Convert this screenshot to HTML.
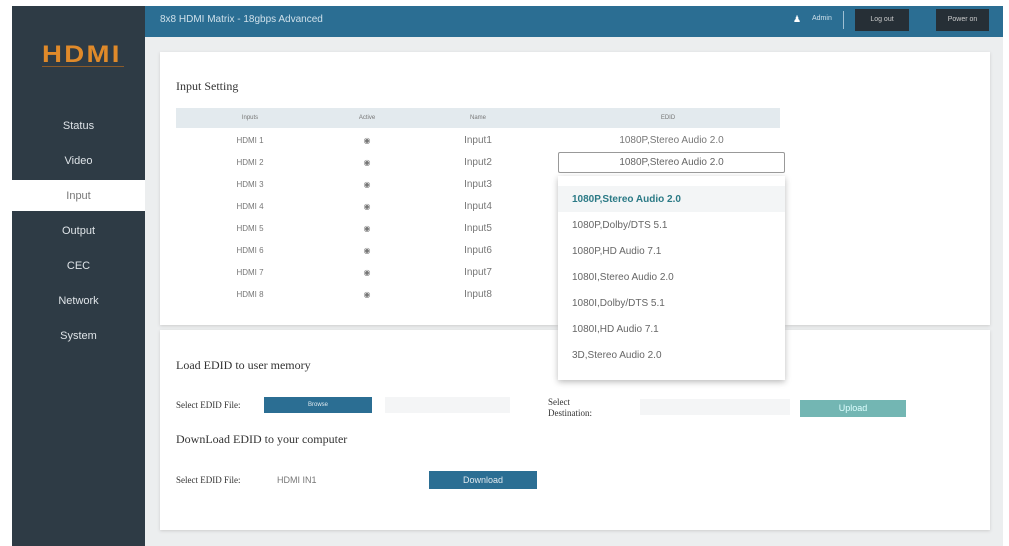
<!DOCTYPE html>
<html><head><style>
body{margin:0;width:1009px;height:546px;background:#fff;position:relative;overflow:hidden;font-family:"Liberation Sans",sans-serif;}
.a{position:absolute}
.side{left:12px;top:6px;width:133px;height:540px;background:#2e3b45}
.menu{left:12px;width:133px;text-align:center;color:#dfe4e8;font-size:11px}
.hdr{left:145px;top:6px;width:858px;height:31px;background:#2b6e93}
.main{left:145px;top:37px;width:858px;height:509px;background:#eceeef}
.panel{background:#fff;box-shadow:0 1px 3px #ccc}
.serif{font-family:"Liberation Serif",serif;color:#333}
.td{font-size:8px;color:#777;text-align:center}
.opt{left:572px;font-size:10px;color:#666}
.btn{background:#2b6e93;color:#dfe9ef;font-size:9px;text-align:center}
</style></head><body>
<div class="a side"></div>
<div class="a" style="left:42px;top:41px;font:900 24px 'Liberation Sans',sans-serif;color:#e08a2a;letter-spacing:2px;transform:scaleX(1.15);transform-origin:left">HDMI</div>
<div class="a" style="left:42px;top:66px;width:82px;height:1px;background:#8a5a2a"></div>
<div class="a menu" style="top:120px">Status</div>
<div class="a menu" style="top:155px">Video</div>
<div class="a" style="left:12px;top:180px;width:133px;height:31px;background:#fff"></div>
<div class="a menu" style="top:190px;color:#777">Input</div>
<div class="a menu" style="top:225px">Output</div>
<div class="a menu" style="top:260px">CEC</div>
<div class="a menu" style="top:295px">Network</div>
<div class="a menu" style="top:330px">System</div>
<div class="a hdr"></div>
<div class="a" style="left:160px;top:14px;color:#cfe0ea;font-size:10px">8x8 HDMI Matrix - 18gbps Advanced</div>
<div class="a" style="left:793px;top:14px;color:#fff;font-size:9px">&#9823;</div>
<div class="a" style="left:812px;top:15px;color:#cfe0ea;font-size:7px">Admin</div>
<div class="a" style="left:843px;top:11px;width:1px;height:18px;background:#9fc0d3"></div>
<div class="a" style="left:855px;top:9px;width:54px;height:22px;background:#262f36;color:#ccc;font-size:7px;text-align:center;line-height:22px">Log out</div>
<div class="a" style="left:936px;top:9px;width:53px;height:22px;background:#262f36;color:#ccc;font-size:7px;text-align:center;line-height:22px">Power on</div>
<div class="a main"></div>
<div class="a panel" style="left:160px;top:52px;width:830px;height:273px"></div>
<div class="a panel" style="left:160px;top:330px;width:830px;height:200px"></div>
<div class="a serif" style="left:176px;top:79px;font-size:12px">Input Setting</div>
<div class="a" style="left:176px;top:108px;width:604px;height:20px;background:#e3eaee"></div>
<div class="a td" style="left:200px;top:115px;width:100px;font-size:6px">Inputs</div>
<div class="a td" style="left:317px;top:115px;width:100px;font-size:6px">Active</div>
<div class="a td" style="left:428px;top:115px;width:100px;font-size:6px">Name</div>
<div class="a td" style="left:618px;top:115px;width:100px;font-size:6px">EDID</div>
<div class="a td" style="left:200px;top:136px;width:100px">HDMI 1</div><div class="a td" style="left:317px;top:136px;width:100px">&#9673;</div><div class="a td" style="left:428px;top:135px;width:100px;font-size:10px">Input1</div>
<div class="a td" style="left:200px;top:158px;width:100px">HDMI 2</div><div class="a td" style="left:317px;top:158px;width:100px">&#9673;</div><div class="a td" style="left:428px;top:157px;width:100px;font-size:10px">Input2</div>
<div class="a td" style="left:200px;top:180px;width:100px">HDMI 3</div><div class="a td" style="left:317px;top:180px;width:100px">&#9673;</div><div class="a td" style="left:428px;top:179px;width:100px;font-size:10px">Input3</div>
<div class="a td" style="left:200px;top:202px;width:100px">HDMI 4</div><div class="a td" style="left:317px;top:202px;width:100px">&#9673;</div><div class="a td" style="left:428px;top:201px;width:100px;font-size:10px">Input4</div>
<div class="a td" style="left:200px;top:224px;width:100px">HDMI 5</div><div class="a td" style="left:317px;top:224px;width:100px">&#9673;</div><div class="a td" style="left:428px;top:223px;width:100px;font-size:10px">Input5</div>
<div class="a td" style="left:200px;top:246px;width:100px">HDMI 6</div><div class="a td" style="left:317px;top:246px;width:100px">&#9673;</div><div class="a td" style="left:428px;top:245px;width:100px;font-size:10px">Input6</div>
<div class="a td" style="left:200px;top:268px;width:100px">HDMI 7</div><div class="a td" style="left:317px;top:268px;width:100px">&#9673;</div><div class="a td" style="left:428px;top:267px;width:100px;font-size:10px">Input7</div>
<div class="a td" style="left:200px;top:290px;width:100px">HDMI 8</div><div class="a td" style="left:317px;top:290px;width:100px">&#9673;</div><div class="a td" style="left:428px;top:289px;width:100px;font-size:10px">Input8</div>
<div class="a td" style="left:558px;top:135px;width:227px;font-size:10px">1080P,Stereo Audio 2.0</div>
<div class="a" style="left:558px;top:152px;width:225px;height:19px;border:1px solid #999;border-radius:2px;font-size:10px;color:#666;text-align:center;line-height:19px">1080P,Stereo Audio 2.0</div>
<div class="a panel" style="left:558px;top:176px;width:227px;height:204px;box-shadow:0 2px 6px #bbb"></div>
<div class="a" style="left:558px;top:186px;width:227px;height:26px;background:#f3f5f6"></div>
<div class="a opt" style="top:194px;font-weight:bold;color:#2b7a86">1080P,Stereo Audio 2.0</div>
<div class="a opt" style="top:220px">1080P,Dolby/DTS 5.1</div>
<div class="a opt" style="top:246px">1080P,HD Audio 7.1</div>
<div class="a opt" style="top:272px">1080I,Stereo Audio 2.0</div>
<div class="a opt" style="top:298px">1080I,Dolby/DTS 5.1</div>
<div class="a opt" style="top:324px">1080I,HD Audio 7.1</div>
<div class="a opt" style="top:350px">3D,Stereo Audio 2.0</div>
<div class="a serif" style="left:176px;top:358px;font-size:12px">Load EDID to user memory</div>
<div class="a serif" style="left:176px;top:400px;font-size:9px">Select EDID File:</div>
<div class="a btn" style="left:264px;top:397px;width:108px;height:16px;line-height:16px;font-size:6px">Browse</div>
<div class="a" style="left:385px;top:397px;width:125px;height:16px;background:#f4f5f6"></div>
<div class="a serif" style="left:548px;top:397px;font-size:9px;line-height:11px">Select<br>Destination:</div>
<div class="a" style="left:640px;top:399px;width:150px;height:16px;background:#f4f5f6"></div>
<div class="a" style="left:800px;top:400px;width:106px;height:17px;background:#73b6b3;color:#dff;font-size:9px;text-align:center;line-height:17px">Upload</div>
<div class="a serif" style="left:176px;top:432px;font-size:12px">DownLoad EDID to your computer</div>
<div class="a serif" style="left:176px;top:475px;font-size:9px">Select EDID File:</div>
<div class="a" style="left:265px;top:471px;width:150px;height:18px;font-size:9px;color:#777;line-height:18px;padding-left:12px">HDMI IN1</div>
<div class="a btn" style="left:429px;top:471px;width:108px;height:18px;line-height:18px">Download</div>
</body></html>
